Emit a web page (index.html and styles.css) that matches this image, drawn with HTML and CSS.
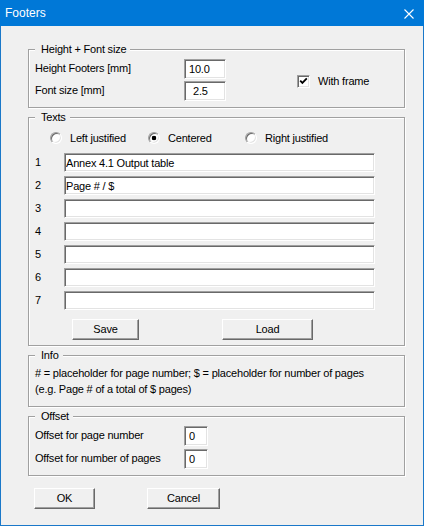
FILE: index.html
```html
<!DOCTYPE html>
<html lang="en">
<head>
<meta charset="utf-8">
<title>Footers</title>
<link rel="stylesheet" href="styles.css">
</head>
<body>
<div class="window">
  <div class="titlebar">
    <span class="title">Footers</span>
    <svg class="close" width="10" height="10" viewBox="0 0 10 10" aria-label="Close">
      <path d="M0.5 0.5 L9.5 9.5 M9.5 0.5 L0.5 9.5" stroke="#fff" stroke-width="1.1" fill="none"/>
    </svg>
  </div>

  <div class="dialog">
    <section class="group group-size">
      <div class="group-title">Height + Font size</div>
      <div class="size-body">
        <div class="size-rows">
          <label class="form-row">
            <span class="row-label">Height Footers [mm]</span>
            <input class="edit edit-num edit-wide" value="10.0">
          </label>
          <label class="form-row">
            <span class="row-label">Font size [mm]</span>
            <input class="edit edit-num edit-wide edit-indent" value="2.5">
          </label>
        </div>
        <label class="checkbox">
          <span class="check-box">
            <svg width="9" height="9" viewBox="0 0 9 9"><path d="M1.2 3.6 L3.4 5.9 L7.8 1.4" stroke="#000" stroke-width="1.8" fill="none"/></svg>
          </span>
          <span>With frame</span>
        </label>
      </div>
    </section>

    <section class="group group-texts">
      <div class="group-title">Texts</div>
      <div class="radio-row">
        <label class="radio-opt"><span class="radio"></span><span>Left justified</span></label>
        <label class="radio-opt"><span class="radio radio-on"></span><span>Centered</span></label>
        <label class="radio-opt"><span class="radio"></span><span>Right justified</span></label>
      </div>
      <div class="lines">
        <span class="line-no">1</span><input class="edit edit-line" value="Annex 4.1 Output table">
        <span class="line-no">2</span><input class="edit edit-line" value="Page # / $">
        <span class="line-no">3</span><input class="edit edit-line" value="">
        <span class="line-no">4</span><input class="edit edit-line" value="">
        <span class="line-no">5</span><input class="edit edit-line" value="">
        <span class="line-no">6</span><input class="edit edit-line" value="">
        <span class="line-no">7</span><input class="edit edit-line" value="">
      </div>
      <div class="texts-buttons">
        <button class="btn btn-save">Save</button>
        <button class="btn btn-load">Load</button>
      </div>
    </section>

    <section class="group group-info">
      <div class="group-title">Info</div>
      <p class="info-text"># = placeholder for page number; $ = placeholder for number of pages<br>(e.g. Page # of a total of $ pages)</p>
    </section>

    <section class="group group-offset">
      <div class="group-title">Offset</div>
      <div class="offset-rows">
        <label class="form-row">
          <span class="row-label">Offset for page number</span>
          <input class="edit edit-num edit-narrow" value="0">
        </label>
        <label class="form-row">
          <span class="row-label">Offset for number of pages</span>
          <input class="edit edit-num edit-narrow" value="0">
        </label>
      </div>
    </section>

    <div class="dialog-buttons">
      <button class="btn btn-ok">OK</button>
      <button class="btn btn-cancel">Cancel</button>
    </div>
  </div>
</div>
</body>
</html>
```

FILE: styles.css
```css
* {
  box-sizing: border-box;
}

html, body {
  margin: 0;
  padding: 0;
  background: #f0f0f0;
}

body {
  font-family: "Liberation Sans", Arial, sans-serif;
  font-size: 11px;
  letter-spacing: -0.2px;
  color: #000;
}

.window {
  width: 424px;
  height: 526px;
  background: #f0f0f0;
  border: 1px solid #1a78c9;
  border-top: 0;
  display: flex;
  flex-direction: column;
}

/* caption bar */
.titlebar {
  height: 26px;
  margin: 0 -1px;
  background: #0078d7;
  display: flex;
  align-items: center;
  justify-content: space-between;
  padding: 0 10px 0 5px;
}

.title {
  color: #fff;
  font-size: 12px;
  letter-spacing: 0;
  line-height: 26px;
}

.close {
  display: block;
  margin-top: 1px;
}

/* dialog body */
.dialog {
  padding: 0 18px 0 27px;
  display: flex;
  flex-direction: column;
}

/* etched group box */
.group {
  border: 1px solid #a0a0a0;
  box-shadow: inset 1px 1px #fff, 1px 1px #fff;
  margin-top: 9px;
}

.group-title {
  margin: -7px 0 0 6px;
  padding: 0 4px 0 6px;
  width: fit-content;
  height: 13px;
  line-height: 13px;
  background: #f0f0f0;
}

.group-size {
  margin-top: 23px;
}

/* sunken edit field */
.edit {
  display: block;
  height: 20px;
  margin: 0;
  padding: 0 0 0 1px;
  border: 1px solid;
  border-color: #a0a0a0 #fff #fff #a0a0a0;
  box-shadow: inset 1px 1px #696969, inset -1px -1px #e3e3e3;
  background: #fff;
  font: inherit;
  letter-spacing: inherit;
  color: #000;
  outline: none;
}

.edit-num {
  padding-left: 4px;
}

.edit-indent {
  padding-left: 8px;
}

.edit-wide {
  width: 42px;
}

.edit-narrow {
  width: 24px;
}

.form-row {
  display: flex;
  align-items: center;
}

.row-label {
  width: 149px;
  padding-bottom: 2px;
}

/* Height + Font size */
.size-body {
  display: flex;
  align-items: center;
  padding: 3px 0 6px 6px;
}

.size-rows {
  display: flex;
  flex-direction: column;
  gap: 2px;
}

.checkbox {
  display: flex;
  align-items: center;
  gap: 8px;
  margin-left: 71px;
  margin-top: 2px;
}

.check-box {
  width: 13px;
  height: 13px;
  border: 1px solid;
  border-color: #a0a0a0 #fff #fff #a0a0a0;
  box-shadow: inset 1px 1px #696969, inset -1px -1px #e3e3e3;
  background: #fff;
  display: flex;
  align-items: center;
  justify-content: center;
}

.check-box svg {
  display: block;
}

/* Texts */
.radio-row {
  display: grid;
  grid-template-columns: 98px 97px auto;
  margin: 7px 0 0 21px;
  height: 13px;
}

.radio-opt {
  display: flex;
  align-items: center;
  gap: 8px;
}

.radio {
  width: 12px;
  height: 12px;
  border-radius: 50%;
  border: 1px solid;
  border-color: #a0a0a0 #fff #fff #a0a0a0;
  box-shadow: inset 1px 1px #696969, inset -1px -1px #e3e3e3;
  background: #fff;
}

.radio-on {
  background: radial-gradient(circle at 50% 50%, #000 0, #000 2px, #fff 2.6px);
}

.lines {
  display: grid;
  grid-template-columns: 29px 311px;
  row-gap: 4px;
  align-items: center;
  margin: 9px 0 0 6px;
}

.line-no {
  padding-bottom: 2px;
}

.edit-line {
  height: 19px;
  width: 311px;
}

.texts-buttons {
  display: flex;
  gap: 83px;
  margin: 9px 0 5px 43px;
}

/* raised push button */
.btn {
  height: 21px;
  margin: 0;
  padding: 0 0 1px;
  border: 1px solid;
  border-color: #fff #696969 #696969 #fff;
  box-shadow: inset -1px -1px #a0a0a0;
  background: #f0f0f0;
  font: inherit;
  letter-spacing: inherit;
  color: #000;
}

.btn-save {
  width: 67px;
}

.btn-load {
  width: 91px;
}

/* Info */
.info-text {
  margin: 3px 0 9px 6px;
  line-height: 16px;
}

/* Offset */
.offset-rows {
  display: flex;
  flex-direction: column;
  gap: 3px;
  padding: 3px 0 6px 6px;
}

/* dialog buttons */
.dialog-buttons {
  display: flex;
  gap: 52px;
  margin: 12px 0 0 6px;
}

.btn-ok {
  width: 61px;
}

.btn-cancel {
  width: 73px;
}
```
